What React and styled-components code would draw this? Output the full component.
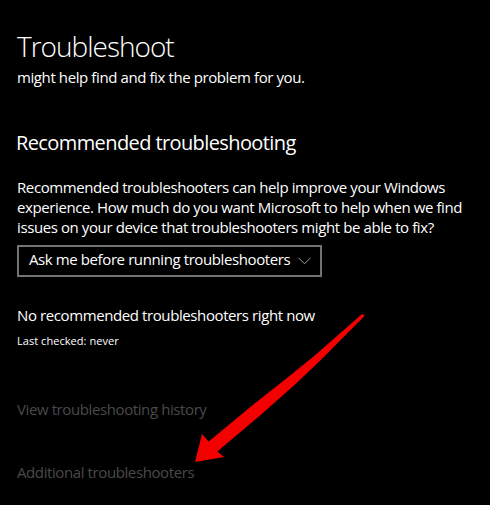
import React from 'react';
import styled, { createGlobalStyle } from 'styled-components';

const GlobalStyle = createGlobalStyle`
    html, body {
        margin: 0;
        padding: 0;
        background: #000;
    }
    body {
        font-family: "Open Sans", "Noto Sans", sans-serif;
        color: #fff;
    }
`;

const Page = styled.div`
    position: relative;
    min-height: 505px;
    padding: 29px 17px 0;
    box-sizing: border-box;
    display: flex;
    flex-direction: column;
    align-items: flex-start;
    overflow: hidden;
`;

const Title = styled.h1`
    margin: 0;
    font-size: 28px;
    line-height: 34px;
    font-weight: 300;
    letter-spacing: -1px;
`;

const Heading = styled.h2`
    margin: ${({ $top }) => $top}px 0 0 -1px;
    font-size: 20px;
    line-height: 26px;
    font-weight: 400;
    letter-spacing: -0.6px;
`;

const Text = styled.p`
    margin: ${({ $top }) => $top || 0}px 0 0;
    font-size: ${({ $small }) => ($small ? 11 : 15)}px;
    line-height: ${({ $small }) => ($small ? 16 : 20)}px;
    letter-spacing: ${({ $small }) => ($small ? 0.05 : -0.4)}px;
    color: ${({ $muted }) => ($muted ? '#4a4a4a' : '#fff')};
    max-width: 456px;
`;

const Select = styled.div`
    margin-top: 8px;
    width: 305px;
    box-sizing: border-box;
    border: 2px solid #737373;
    padding: 2px 9px 6px 10px;
    display: flex;
    align-items: center;
    justify-content: space-between;
    font-size: 15px;
    line-height: 20px;
    letter-spacing: -0.4px;
`;

const Chevron = styled.svg`
    width: 13px;
    height: 8px;
    margin-top: 4px;
    flex-shrink: 0;
`;

// red annotation arrow drawn over the page
const Arrow = styled.svg`
    position: absolute;
    left: 0;
    top: 0;
    width: 490px;
    height: 505px;
    pointer-events: none;
`;

const App = () => (
    <>
        <GlobalStyle />
        <Page>
            <Title>Troubleshoot</Title>
            <Text $top={4}>might help find and fix the problem for you.</Text>
            <Heading $top={43}>Recommended troubleshooting</Heading>
            <Text $top={21}>
                Recommended troubleshooters can help improve your Windows experience. How much do you
                want Microsoft to help when we find issues on your device that troubleshooters might be
                able to fix?
            </Text>
            <Select>
                <span>Ask me before running troubleshooters</span>
                <Chevron viewBox="0 0 13 8">
                    <path d="M0.5 0.8 L6.5 6.8 L12.5 0.8" fill="none" stroke="#a0a0a0" strokeWidth="1" />
                </Chevron>
            </Select>
            <Text $top={28}>No recommended troubleshooters right now</Text>
            <Text $top={8} $small>Last checked: never</Text>
            <Text $top={50} $muted>View troubleshooting history</Text>
            <Text $top={43} $muted>Additional troubleshooters</Text>
            <Arrow viewBox="0 0 490 505">
                <polygon
                    points="363,314 364.5,316 320,360.8 295.8,383.8 260.9,414.7 217.3,451.4 224,457 195,462 202,434 208.7,441.6 252.5,405.3 289.2,376.3 315,355.2 361.5,314.5"
                    fill="#f40000"
                />
            </Arrow>
        </Page>
    </>
);

export default App;
